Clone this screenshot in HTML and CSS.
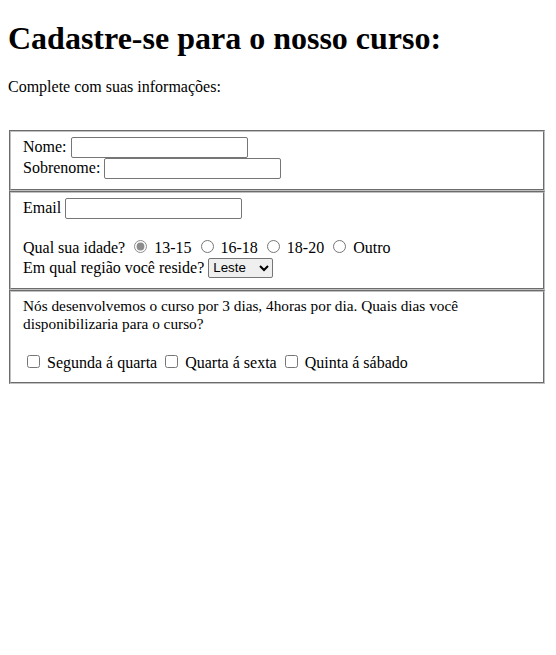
FILE: index.html
```html
<!DOCTYPE html>
<html lang="pt-BR">
<head>
<meta charset="utf-8">
<title>Cadastro</title>
<link rel="stylesheet" href="styles.css">
</head>
<body>
<h1 class="title">Cadastre-se para o nosso curso:</h1>
<p class="intro">Complete com suas informações:</p>
<br>
<form class="form">
  <fieldset class="box">
    <label>Nome: <input type="text" class="field"></label><br>
    <label>Sobrenome: <input type="text" class="field"></label>
  </fieldset>
  <fieldset class="box">
    <label>Email <input type="email" class="field"></label><br><br>
    Qual sua idade?
    <input type="radio" name="idade" checked class="radio"> 13-15
    <input type="radio" name="idade" class="radio"> 16-18
    <input type="radio" name="idade" class="radio"> 18-20
    <input type="radio" name="idade" class="radio"> Outro<br>
    Em qual região você reside?
    <select class="sel"><option>Leste</option><option>Oeste</option><option>Norte</option><option>Sul</option></select>
  </fieldset>
  <fieldset class="box">
    <span class="question">Nós desenvolvemos o curso por 3 dias, 4horas por dia. Quais dias você disponibilizaria para o curso?</span><br><br>
    <input type="checkbox" class="check"> Segunda á quarta
    <input type="checkbox" class="check"> Quarta á sexta
    <input type="checkbox" class="check"> Quinta á sábado
  </fieldset>
</form>
</body>
</html>
```
FILE: styles.css
```css
body {
  margin: 8px;
  font-family: "Liberation Serif", "Times New Roman", serif;
  font-size: 16px;
  color: #000;
  background: #fff;
}
.title {
  font-size: 32px;
  margin: 12px 0 21px;
}
.intro {
  font-size: 16px;
  margin: 16px 0;
}
.form {
  font-size: 16px;
  line-height: 1.15;
}
.box {
  margin: 0 3px 0 1px;
  padding: 5px 12px 10px;
  border: 2px groove #c0c0c0;
}
.field {
  box-sizing: border-box;
  width: 177px;
  height: 21px;
  font-family: Arial, "Liberation Sans", sans-serif;
  font-size: 13px;
  border: 1px solid #767676;
  border-radius: 2px;
  padding: 1px 2px;
  vertical-align: baseline;
}
.radio {
  accent-color: #8c8c8c;
  margin: 3px 3px 0 5px;
}
.check {
  margin: 3px 3px 3px 4px;
}
.sel {
  box-sizing: border-box;
  width: 65px;
  height: 20px;
  font-family: Arial, "Liberation Sans", sans-serif;
  font-size: 13.33px;
  border: 1px solid #767676;
  border-radius: 2px;
}
.question {
  font-size: 15.3px;
}
```
